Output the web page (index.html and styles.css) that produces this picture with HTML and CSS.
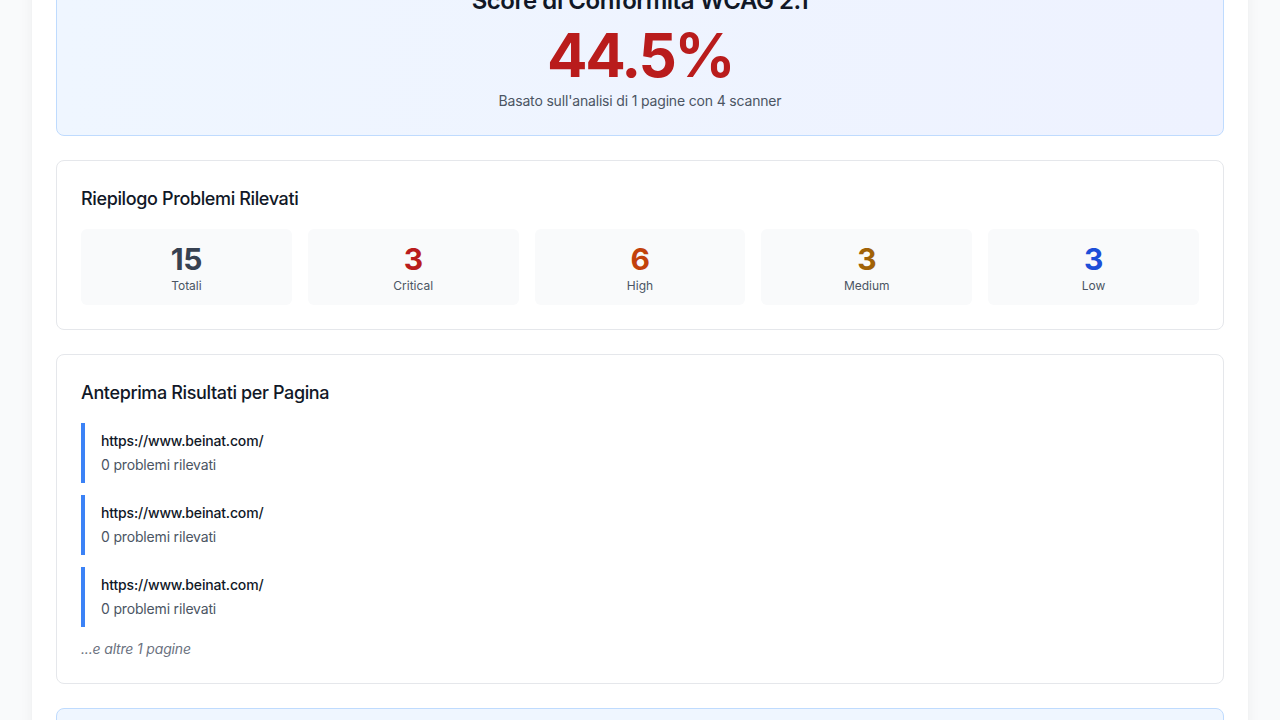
FILE: index.html
```html
<!DOCTYPE html>
<html lang="it">
<head>
<meta charset="utf-8">
<title>Report WCAG</title>
<link rel="stylesheet" href="styles.css">
</head>
<body>
<main class="report">
  <section class="card score-card">
    <h2 class="score-title">Score di Conformità WCAG 2.1</h2>
    <div class="score-value">44.5%</div>
    <p class="score-note">Basato sull'analisi di 1 pagine con 4 scanner</p>
  </section>

  <section class="card">
    <h3 class="card-title">Riepilogo Problemi Rilevati</h3>
    <div class="stats">
      <div class="stat"><div class="stat-num c-total">15</div><div class="stat-label">Totali</div></div>
      <div class="stat"><div class="stat-num c-critical">3</div><div class="stat-label">Critical</div></div>
      <div class="stat"><div class="stat-num c-high">6</div><div class="stat-label">High</div></div>
      <div class="stat"><div class="stat-num c-medium">3</div><div class="stat-label">Medium</div></div>
      <div class="stat"><div class="stat-num c-low">3</div><div class="stat-label">Low</div></div>
    </div>
  </section>

  <section class="card">
    <h3 class="card-title">Anteprima Risultati per Pagina</h3>
    <div class="pages">
      <div class="page-item"><div class="page-url">https://www.beinat.com/</div><div class="page-count">0 problemi rilevati</div></div>
      <div class="page-item"><div class="page-url">https://www.beinat.com/</div><div class="page-count">0 problemi rilevati</div></div>
      <div class="page-item"><div class="page-url">https://www.beinat.com/</div><div class="page-count">0 problemi rilevati</div></div>
      <p class="more">...e altre 1 pagine</p>
    </div>
  </section>

  <section class="card info-card"></section>
</main>
</body>
</html>
```

FILE: styles.css
```css
* { box-sizing: border-box; }
html, body { margin: 0; padding: 0; }
body {
  background: #f9fafb;
  font-family: Inter, "Noto Sans", "Liberation Sans", sans-serif;
  color: #111827;
  overflow: hidden;
}
.report {
  width: 1216px;
  margin: -64px auto 0;
  background: #ffffff;
  padding: 24px 24px 200px;
  box-shadow: 0 10px 15px -3px rgba(0,0,0,0.08), 0 4px 6px -4px rgba(0,0,0,0.08);
  display: flex;
  flex-direction: column;
  gap: 24px;
}
.card {
  background: #ffffff;
  border: 1px solid #e5e7eb;
  border-radius: 8px;
  padding: 24px;
}
.score-card {
  background: linear-gradient(to right, #eff6ff, #eef2ff);
  border-color: #bfdbfe;
  text-align: center;
}
.info-card {
  background: #eff6ff;
  border-color: #bfdbfe;
  min-height: 120px;
}
.score-title {
  margin: 0 0 8px;
  font-size: 24px;
  line-height: 32px;
  font-weight: 600;
  letter-spacing: -0.46px;
  color: #111827;
}
.score-value {
  font-size: 60px;
  line-height: 60px;
  font-weight: 700;
  letter-spacing: -2.4px;
  color: #b91c1c;
}
.score-note {
  margin: 6px 0 0;
  font-size: 14px;
  line-height: 20px;
  letter-spacing: -0.17px;
  color: #4b5563;
}
.card-title {
  margin: 0 0 16px;
  font-size: 18px;
  line-height: 28px;
  font-weight: 500;
  letter-spacing: -0.37px;
  color: #111827;
}
.stats {
  display: grid;
  grid-template-columns: repeat(5, 1fr);
  gap: 16px;
}
.stat {
  background: #f9fafb;
  border-radius: 6px;
  padding: 12px 12px 11px;
  text-align: center;
}
.stat-num {
  font-size: 30px;
  line-height: 36px;
  font-weight: 700;
  letter-spacing: -0.3px;
}
.stat-label {
  margin-top: 1px;
  font-size: 12px;
  line-height: 16px;
  color: #4b5563;
}
.c-total { color: #374151; }
.c-critical { color: #b91c1c; }
.c-high { color: #c2410c; }
.c-medium { color: #a16207; }
.c-low { color: #1d4ed8; }
.pages {
  display: flex;
  flex-direction: column;
  gap: 12px;
}
.page-item {
  border-left: 4px solid #3b82f6;
  padding: 8px 0 8px 16px;
  display: flex;
  flex-direction: column;
  gap: 4px;
}
.page-url {
  font-size: 14px;
  line-height: 20px;
  font-weight: 500;
  letter-spacing: -0.17px;
  color: #111827;
}
.page-count {
  font-size: 14px;
  line-height: 20px;
  letter-spacing: -0.17px;
  color: #4b5563;
}
.more {
  margin: 0;
  font-size: 14px;
  line-height: 20px;
  font-style: italic;
  letter-spacing: -0.17px;
  color: #6b7280;
}
```
